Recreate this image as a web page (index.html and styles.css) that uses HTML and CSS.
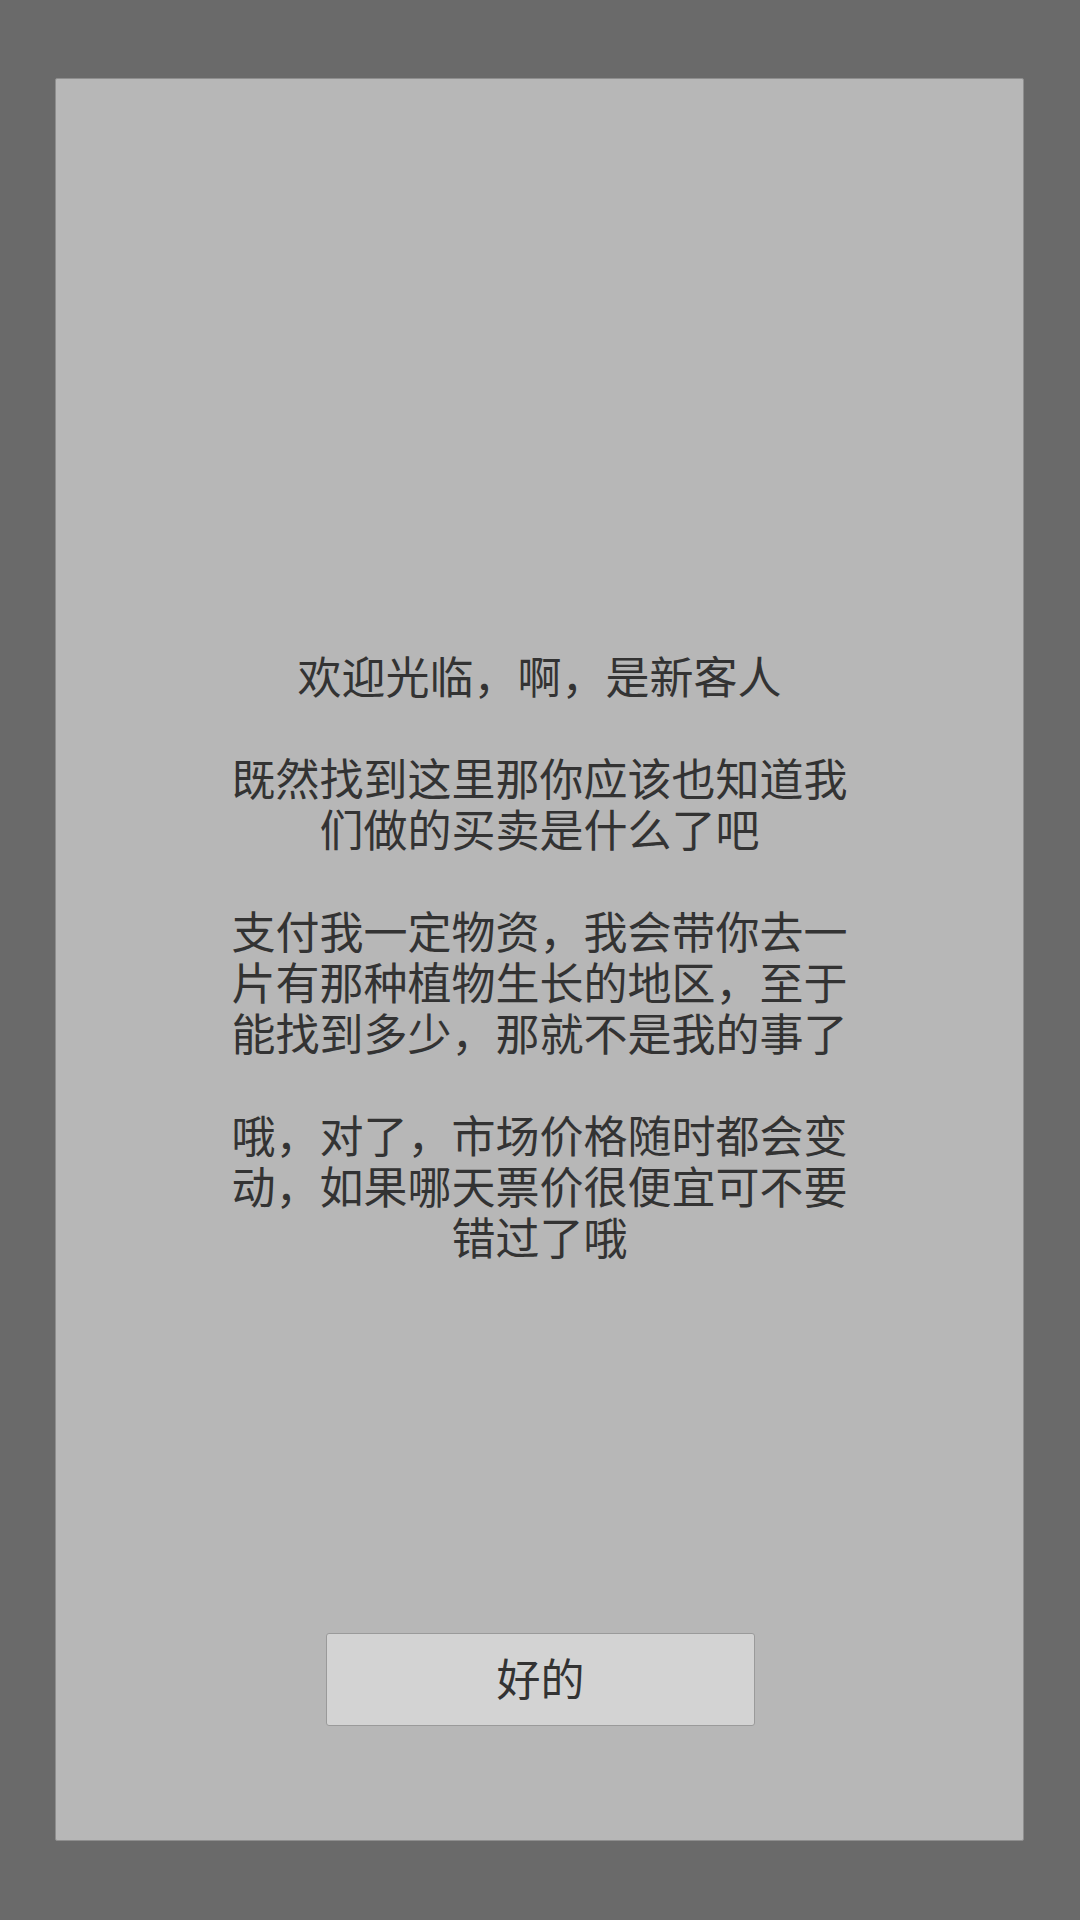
FILE: index.html
```html
<!DOCTYPE html>
<html lang="zh-CN">
<head>
    <meta charset="UTF-8">
    <meta name="viewport" content="width=device-width, initial-scale=1.0">
    <title>新客人</title>
    <link rel="stylesheet" href="styles.css">
</head>
<body>

<div class="dialog">
    <div class="dialog-text">
        <p>欢迎光临，啊，是新客人</p>
        <p>既然找到这里那你应该也知道我们做的买卖是什么了吧</p>
        <p>支付我一定物资，我会带你去一片有那种植物生长的地区，至于能找到多少，那就不是我的事了</p>
        <p>哦，对了，市场价格随时都会变动，如果哪天票价很便宜可不要错过了哦</p>
    </div>
    <button type="button" class="ok-btn">好的</button>
</div>

</body>
</html>
```

FILE: styles.css
```css
html, body {
    margin: 0;
    padding: 0;
}
body {
    width: 1080px;
    height: 1920px;
    background-color: #6a6a6a;
    font-family: "Noto Sans CJK SC", "Noto Sans", sans-serif;
    color: #333;
    overflow: hidden;
}
.dialog {
    box-sizing: border-box;
    width: 969px;
    height: 1763px;
    margin: 78px 0 0 55px;
    background-color: #b7b7b7;
    border: 1px solid #8e8e8e;
    border-radius: 2px;
    display: grid;
}
.dialog-text {
    grid-area: 1 / 1;
    align-self: center;
    justify-self: center;
    width: 620px;
    padding-bottom: 7px;
    display: flex;
    flex-direction: column;
    gap: 51px;
    text-align: center;
    font-size: 44px;
    line-height: 51px;
}
.dialog-text p {
    margin: 0;
}
.ok-btn {
    grid-area: 1 / 1;
    align-self: end;
    justify-self: center;
    box-sizing: border-box;
    width: 429px;
    height: 93px;
    margin: 0 0 114px 2px;
    padding: 0 0 6px 0;
    background-color: #d3d3d3;
    border: 1px solid #9a9a9a;
    border-radius: 3px;
    font-family: inherit;
    font-size: 44px;
    color: #333;
}
```
